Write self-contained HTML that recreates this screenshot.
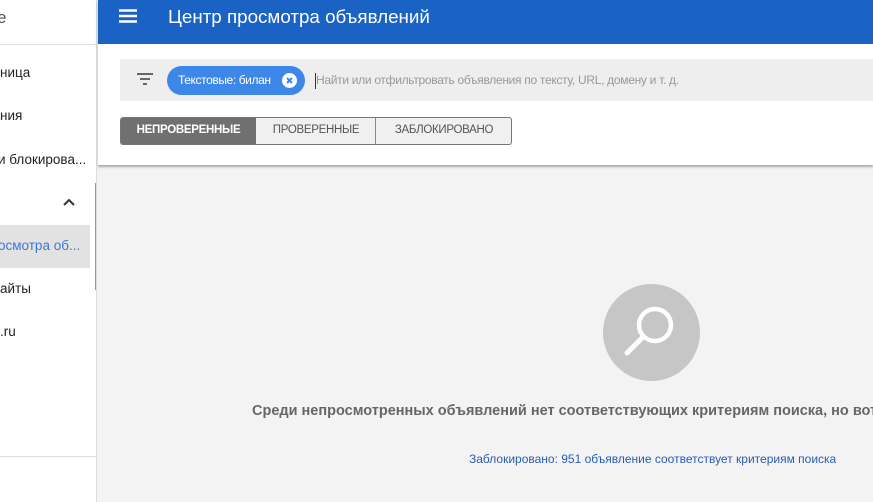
<!DOCTYPE html>
<html><head><meta charset="utf-8"><style>
*{margin:0;padding:0;box-sizing:border-box}
body{width:873px;height:502px;overflow:hidden;font-family:"Liberation Sans",Arial,sans-serif;background:#f3f3f3;position:relative}
.abs{position:absolute;white-space:nowrap}
#side{position:absolute;left:0;top:0;width:97px;height:502px;background:#fff;border-right:1px solid #ddd;overflow:hidden}
#side .t{position:absolute;font-size:13.5px;color:#222}
#hdr{position:absolute;left:98px;top:0;width:775px;height:44px;background:#1a63c5;box-shadow:0 2px 3px rgba(0,0,0,.3)}
#panel{position:absolute;left:98px;top:44px;width:775px;height:121px;background:#fff;box-shadow:0 2px 2px rgba(0,0,0,.3)}
</style></head><body>
<div id="side">
  <div class="t" style="left:-3px;top:8px;font-size:17px;color:#555">e</div>
  <div style="position:absolute;left:0;top:44px;width:97px;height:1px;background:#ddd"></div>
  <div class="t" style="left:0;top:65px">ница</div>
  <div class="t" style="left:0;top:108px">ния</div>
  <div class="t" style="left:-2px;top:152px">и блокирова...</div>
  <svg class="abs" style="left:62px;top:197px" width="14" height="10" viewBox="0 0 14 10"><path d="M2 8 L7 3 L12 8" fill="none" stroke="#333" stroke-width="2"/></svg>
  <div style="position:absolute;left:0;top:225px;width:90px;height:43px;background:#e2e2e2"></div>
  <div class="t" style="left:-2px;top:238px;color:#3b78d8">осмотра об...</div>
  <div class="t" style="left:0;top:281px">айты</div>
  <div class="t" style="left:0;top:324px">.ru</div>
  <div style="position:absolute;left:95px;top:183px;width:1px;height:107px;background:#999"></div>
  <div style="position:absolute;left:0;top:456px;width:97px;height:1px;background:#ddd"></div>
</div>
<div id="hdr">
  <svg class="abs" style="left:21px;top:9px" width="18" height="14" viewBox="0 0 18 14"><path d="M0 1.5H18M0 7H18M0 12.5H18" stroke="#fff" stroke-width="2.4"/></svg>
  <div class="abs" style="left:70px;top:6px;font-size:18.8px;color:#fff">Центр просмотра объявлений</div>
</div>
<div id="panel">
  <div style="position:absolute;left:22px;top:15px;width:760px;height:42px;background:#eee"></div>
  <svg class="abs" style="left:39px;top:29px" width="16" height="12" viewBox="0 0 16 12"><path d="M0 1H16M3 6H13M6 11H10" stroke="#666" stroke-width="2"/></svg>
  <div class="abs" style="left:69px;top:22px;width:138px;height:29px;border-radius:15px;background:#3d87e8"></div>
  <div class="abs" style="left:80px;top:29px;font-size:12px;letter-spacing:-0.4px;color:#fff">Текстовые: билан</div>
  <div class="abs" style="left:184px;top:29px;width:15px;height:15px;border-radius:50%;background:#fff"></div>
  <svg class="abs" style="left:184px;top:29px" width="15" height="15" viewBox="0 0 15 15"><path d="M5 5L10 10M10 5L5 10" stroke="#3d87e8" stroke-width="2"/></svg>
  <div class="abs" style="left:217px;top:29px;width:1px;height:16px;background:#333"></div>
  <div class="abs" style="left:218px;top:29px;font-size:12px;letter-spacing:-0.3px;color:#999">Найти или отфильтровать объявления по тексту, URL, домену и т. д.</div>
  <div class="abs" style="left:22px;top:73px;width:392px;height:28px;border:1px solid #777;border-radius:3px;background:#f0f0f0;overflow:hidden">
    <div style="position:absolute;left:0;top:0;width:135px;height:26px;background:#707070"></div>
    <div class="abs" style="left:0;width:135px;top:6px;text-align:center;font-size:11.5px;letter-spacing:-0.3px;font-weight:bold;color:#fff">НЕПРОВЕРЕННЫЕ</div>
    <div class="abs" style="left:135px;width:120px;top:6px;text-align:center;font-size:11.5px;letter-spacing:-0.3px;color:#555">ПРОВЕРЕННЫЕ</div>
    <div style="position:absolute;left:254px;top:0;width:1px;height:26px;background:#888"></div>
    <div class="abs" style="left:255px;width:136px;top:6px;text-align:center;font-size:11.5px;letter-spacing:-0.3px;color:#555">ЗАБЛОКИРОВАНО</div>
  </div>
</div>
<svg class="abs" style="left:603px;top:284px" width="97" height="97" viewBox="0 0 97 97">
  <circle cx="48.5" cy="48.5" r="48.5" fill="#c6c6c6"/>
  <circle cx="52" cy="41" r="16" fill="none" stroke="#fff" stroke-width="4.5"/>
  <path d="M40 53L24 69" stroke="#fff" stroke-width="5" stroke-linecap="round"/>
</svg>
<div class="abs" style="left:252px;top:403px;font-size:14.5px;font-weight:bold;color:#666">Среди непросмотренных объявлений нет соответствующих критериям поиска, но вот</div>
<div class="abs" style="left:469px;top:452px;font-size:12px;color:#2a5db0">Заблокировано: 951 объявление соответствует критериям поиска</div>
</body></html>
